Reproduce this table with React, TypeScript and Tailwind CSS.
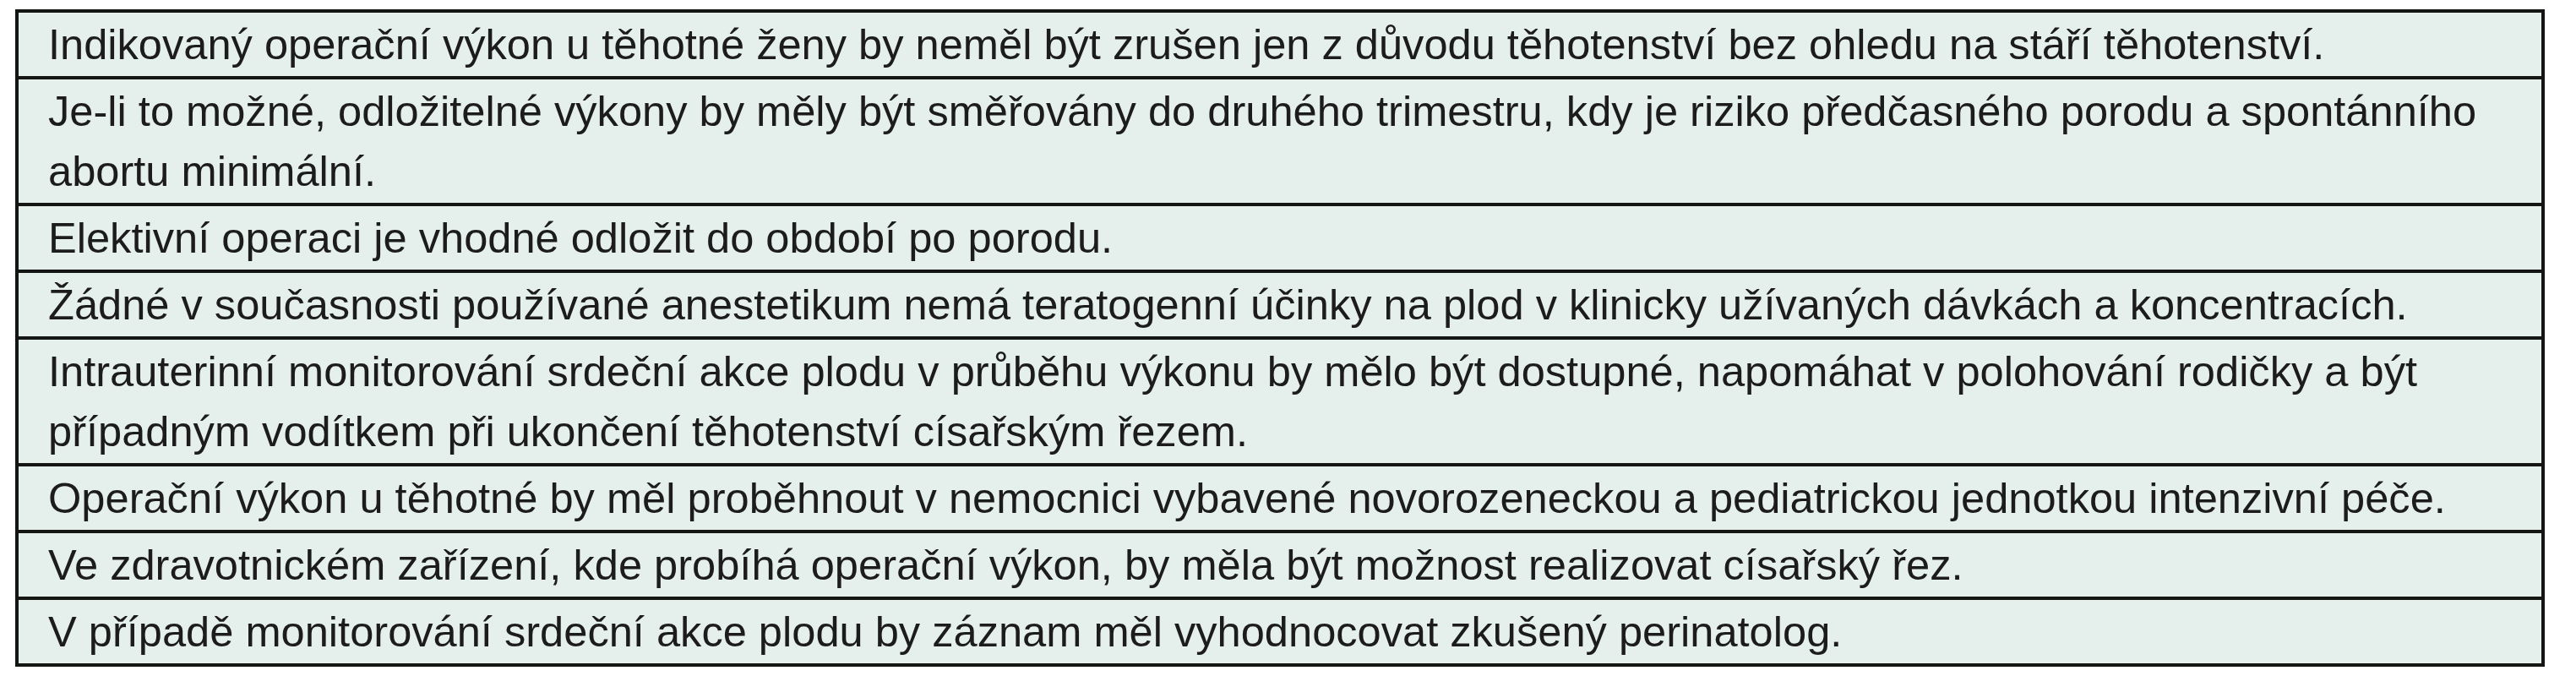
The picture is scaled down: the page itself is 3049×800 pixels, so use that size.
const rows: string[][] = [
  [
    "Indikovaný operační výkon u těhotné ženy by neměl být zrušen jen z důvodu těhotenství bez ohledu na stáří těhotenství.",
  ],
  [
    "Je-li to možné, odložitelné výkony by měly být směřovány do druhého trimestru, kdy je riziko předčasného porodu a spontánního",
    "abortu minimální.",
  ],
  ["Elektivní operaci je vhodné odložit do období po porodu."],
  [
    "Žádné v současnosti používané anestetikum nemá teratogenní účinky na plod v klinicky užívaných dávkách a koncentracích.",
  ],
  [
    "Intrauterinní monitorování srdeční akce plodu v průběhu výkonu by mělo být dostupné, napomáhat v polohování rodičky a být",
    "případným vodítkem při ukončení těhotenství císařským řezem.",
  ],
  [
    "Operační výkon u těhotné by měl proběhnout v nemocnici vybavené novorozeneckou a pediatrickou jednotkou intenzivní péče.",
  ],
  ["Ve zdravotnickém zařízení, kde probíhá operační výkon, by měla být možnost realizovat císařský řez."],
  ["V případě monitorování srdeční akce plodu by záznam měl vyhodnocovat zkušený perinatolog."],
]

export default function App() {
  return (
    <div className="min-h-[800px] w-[3049px] bg-white pt-[11px] pl-[18px]">
      <div
        className="w-[2994px] border-[4px] border-[#141614] bg-[#e5efeb] text-[#1c1c1c]"
        style={{ fontFamily: '"Liberation Sans", Arial, sans-serif' }}
      >
        {rows.map((lines, i) => (
          <div
            key={i}
            className={`py-[2px] pl-[35px] pr-[20px] text-[50.6px] leading-[71px] whitespace-nowrap ${
              i > 0 ? "border-t-[4px] border-[#141614]" : ""
            }`}
          >
            {lines.map((line, j) => (
              <div key={j}>{line}</div>
            ))}
          </div>
        ))}
      </div>
    </div>
  )
}
